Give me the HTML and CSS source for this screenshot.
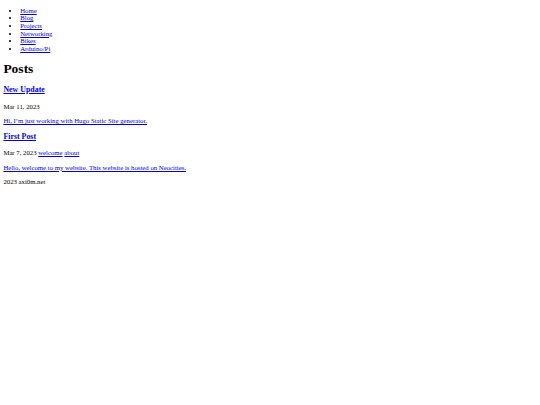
FILE: index.html
```html
<!DOCTYPE html>
<html lang="en">
<head>
<meta charset="utf-8">
<title>axi0m.net</title>
<link rel="stylesheet" href="styles.css">
</head>
<body class="page">
<header class="site-header">
  <nav>
    <ul class="nav-list">
      <li><a href="#">Home</a></li>
      <li><a href="#">Blog</a></li>
      <li><a href="#">Projects</a></li>
      <li><a href="#">Networking</a></li>
      <li><a href="#">Bikes</a></li>
      <li><a href="#">Arduino/Pi</a></li>
    </ul>
  </nav>
</header>
<main class="content">
  <h1 class="page-title">Posts</h1>
  <article class="post">
    <h3 class="post-title"><a href="#">New Update</a></h3>
    <p class="post-meta">Mar 11, 2023</p>
    <p class="post-summary"><a href="#">Hi, I’m just working with Hugo Static Site generator.</a></p>
  </article>
  <article class="post">
    <h3 class="post-title"><a href="#">First Post</a></h3>
    <p class="post-meta">Mar 7, 2023 <a href="#">welcome</a> <a href="#">about</a></p>
    <p class="post-summary"><a href="#">Hello, welcome to my website. This website is hosted on Neocities.</a></p>
  </article>
</main>
<footer class="site-footer">
  <p class="footer-text">2023 axi0m.net</p>
</footer>
</body>
</html>
```

FILE: styles.css
```css
html {
  background: #ffffff;
}

.page {
  margin: 3.375px;
  font-family: "Liberation Serif", "Times New Roman", serif;
  font-size: 6.75px;
  line-height: 7.59px;
  color: #000000;
}

.page a {
  color: #0000ee;
}

.nav-list {
  margin: 3.5px 0 6.75px;
  padding-left: 16.875px;
}

.page-title {
  font-size: 13.5px;
  line-height: 15.6px;
  margin: 9.05px 0;
}

.post-title {
  font-size: 7.9px;
  line-height: 8.86px;
  margin: 7.9px 0;
}

.post-meta,
.post-summary,
.footer-text {
  margin: 6.75px 0;
}
```
